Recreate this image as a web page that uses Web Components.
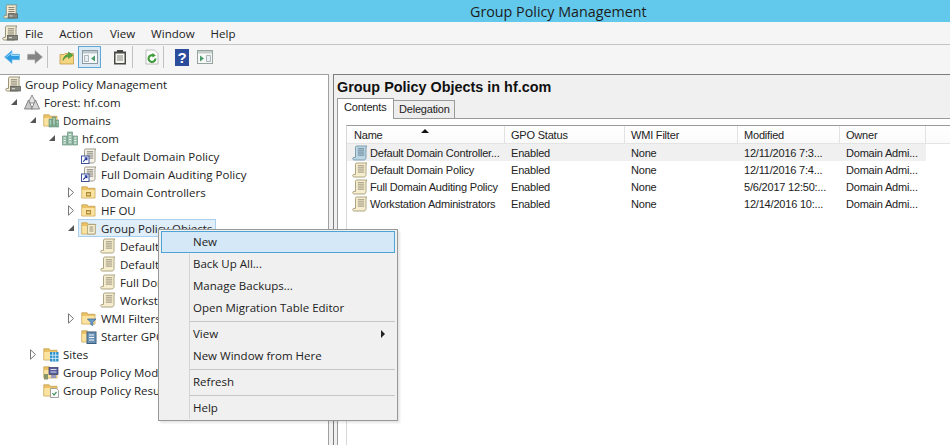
<!DOCTYPE html>
<html>
<head>
<meta charset="utf-8">
<title>Group Policy Management</title>
<style>
  html, body { margin: 0; height: 100%; overflow: hidden; background: #f0f0f0; }
  body { font-family: "Open Sans", "Liberation Sans", sans-serif; font-size: 11.5px; color: #222; }
</style>
</head>
<body>
<gpm-app>
  <gpm-titlebar slot="title">Group Policy Management</gpm-titlebar>
  <gpm-menubar slot="menu"></gpm-menubar>
  <gpm-toolbar slot="tools"></gpm-toolbar>

  <gpm-tree slot="tree">
    <gpm-tree-row level="0" icon="gpmc">Group Policy Management</gpm-tree-row>
    <gpm-tree-row level="1" icon="forest" state="open">Forest: hf.com</gpm-tree-row>
    <gpm-tree-row level="2" icon="domains" state="open">Domains</gpm-tree-row>
    <gpm-tree-row level="3" icon="domain" state="open">hf.com</gpm-tree-row>
    <gpm-tree-row level="4" icon="link">Default Domain Policy</gpm-tree-row>
    <gpm-tree-row level="4" icon="link">Full Domain Auditing Policy</gpm-tree-row>
    <gpm-tree-row level="4" icon="ou" state="closed">Domain Controllers</gpm-tree-row>
    <gpm-tree-row level="4" icon="ou" state="closed">HF OU</gpm-tree-row>
    <gpm-tree-row level="4" icon="gpofolder" state="open" selected>Group Policy Objects</gpm-tree-row>
    <gpm-tree-row level="5" icon="scroll">Default Domain Controllers Policy</gpm-tree-row>
    <gpm-tree-row level="5" icon="scroll">Default Domain Policy</gpm-tree-row>
    <gpm-tree-row level="5" icon="scroll">Full Domain Auditing Policy</gpm-tree-row>
    <gpm-tree-row level="5" icon="scroll">Workstation Administrators</gpm-tree-row>
    <gpm-tree-row level="4" icon="wmi" state="closed">WMI Filters</gpm-tree-row>
    <gpm-tree-row level="4" icon="starter">Starter GPOs</gpm-tree-row>
    <gpm-tree-row level="2" icon="sites" state="closed">Sites</gpm-tree-row>
    <gpm-tree-row level="2" icon="modeling">Group Policy Modeling</gpm-tree-row>
    <gpm-tree-row level="2" icon="results">Group Policy Results</gpm-tree-row>
  </gpm-tree>

  <gpm-details slot="details" heading="Group Policy Objects in hf.com">
    <gpm-gpo-list></gpm-gpo-list>
  </gpm-details>

  <gpm-context-menu slot="overlay"></gpm-context-menu>
</gpm-app>

<script>
(function () {
  // small helper, every element gets its shadow root from a template string
  function shadow(el, html) {
    const t = document.createElement("template");
    t.innerHTML = html;
    el.attachShadow({ mode: "open" }).appendChild(t.content.cloneNode(true));
    return el.shadowRoot;
  }

  const folder = `
    <path d="M.8 4.5V2.800h5.400l1 1.500h6.800V14H.8z" fill="#ecc264" stroke="#c49f52" stroke-width=".8"/>
    <path d="M1.200 6h12.400v7.600H1.200z" fill="#fae3a0"/>`;
  const scrollBody = (fill, line, edge) => `
    <path d="M4.500 1h10.500c-.8.500-1 1.200-1 2v9.500c0 1.500-.8 2.500-2 2.500H2.300c-1 0-1.600-.6-1.600-1.400 0-.6.500-1.200 1.200-1.200h1.600V3c0-1.200.3-2 1-2z" fill="${fill}" stroke="${edge}" stroke-width=".9"/>
    <path d="M5.800 3.800h6.400M5.800 5.900h6.400M5.800 8h6.400M5.800 10.100h6.400" stroke="${line}" stroke-width=".9"/>`;

  const ICONS = {
    scroll: scrollBody("#f7eecf", "#8a8570", "#a39a76"),
    scrollblue: scrollBody("#bcd6e3", "#587488", "#7595a8"),
    link: `
      ${scrollBody("#f4f2ea", "#6e6c60", "#96937f")}
      <rect x="0.500" y="8" width="7.500" height="7.500" fill="#fff" stroke="#3c4f9c"/>
      <path d="M2.200 13.600L5.600 10.200M3.600 9.900h2.300v2.300" fill="none" stroke="#2c40a0" stroke-width="1.200"/>`,
    gpmc: `
      ${scrollBody("#f5edd6", "#6f6c5e", "#8d8770")}
      <rect x="5.500" y="10.500" width="10" height="4.500" fill="#85857e" stroke="#55554f" stroke-width=".7"/>
      <path d="M7 12.700h3" stroke="#e4e4dc"/>`,
    forest: `
      <path d="M8 1L12 9H4z" fill="#e4e4e4" stroke="#858585" stroke-width=".9"/>
      <path d="M4.500 6L8.500 15H.5z" fill="#c8c8c8" stroke="#7b7b7b" stroke-width=".9"/>
      <path d="M11.500 6L15.500 15H7.500z" fill="#d8d8d8" stroke="#7b7b7b" stroke-width=".9"/>`,
    domains: `
      ${folder}
      <path d="M6 7h3v8H6zM9.500 5h3v10h-3zM13 8h2.600v7H13z" fill="#86b59b" stroke="#5f8a74" stroke-width=".6"/>
      <path d="M6.800 9h1.400M6.800 11h1.400M10.300 7h1.400M10.300 9h1.400M10.300 11h1.400M13.600 10h1.400" stroke="#e8f2ec" stroke-width=".8"/>`,
    domain: `
      <path d="M.5 6h4.500v9H.5zM5.500 2h5v13h-5zM11 6h4.500v9H11z" fill="#95bfa8" stroke="#6e9480" stroke-width=".7"/>
      <path d="M1.600 8h2.300M1.600 10.500h2.300M1.600 13h2.300M6.800 4.500h2.400M6.800 7h2.400M6.800 9.500h2.400M6.800 12h2.400M12.100 8h2.300M12.100 10.500h2.300M12.100 13h2.300" stroke="#eef5f1" stroke-width="1"/>`,
    ou: `
      ${folder}
      <path d="M5 8h5v4.500H5z" fill="#b08a38"/>
      <path d="M6 9.500h3v1.600H6z" fill="#f5e09a"/>`,
    gpofolder: `
      ${folder}
      <path d="M8 4.500h7c-.5.500-.7 1-.7 1.500v8H6.500V6C6.500 5.100 7 4.500 8 4.500z" fill="#f7eecf" stroke="#a39a76" stroke-width=".8"/>
      <path d="M8.500 7h3.800M8.500 9h3.800M8.500 11h3.800" stroke="#8a8570" stroke-width=".9"/>`,
    wmi: `
      ${folder}
      <path d="M6.500 9h8.500l-3.200 3.400V15.500l-2-1V12.400z" fill="#6a9bc9" stroke="#40709c" stroke-width=".8"/>`,
    starter: `
      ${folder}
      <rect x="6" y="4" width="9" height="11.500" fill="#6a93b7" stroke="#3d5e7e"/>
      <path d="M8 7h5M8 9.500h5M8 12h5" stroke="#eef3f8" stroke-width="1"/>`,
    sites: `
      ${folder}
      <rect x="7" y="6" width="8.500" height="9.500" fill="#2a90cc"/>
      <path d="M7 9.200h8.500M7 12.400h8.500M9.800 6v9.500M12.700 6v9.500" stroke="#e8f4fb" stroke-width=".8"/>`,
    modeling: `
      ${folder}
      <rect x="6" y="3.500" width="9" height="7" fill="#575c98" stroke="#383b6c" stroke-width=".7"/>
      <path d="M7.500 5.500h6M7.500 8h6" stroke="#dcdff0"/>
      <path d="M1 10h4v5.500H1z" fill="#87956a"/>
      <path d="M8 11h5v3H8z" fill="#9a9abc"/>`,
    results: `
      ${folder}
      <path d="M7.500 6.500h6l2 2v7h-8z" fill="#fbfbfb" stroke="#8a8a8a" stroke-width=".8"/>
      <path d="M9.500 11l1.500 2 2.500-3" fill="none" stroke="#4a9568" stroke-width="1.200"/>`,
    back: `
      <path d="M.5 8L8 1.500v3.800h7.500v5.400H8v3.800z" fill="#2f9be0" stroke="#6bbcec" stroke-width=".6"/>
      <path d="M2.500 8L7.500 4V6.500h7.500" fill="none" stroke="#9ad8f8" stroke-width="1"/>`,
    forward: `
      <path d="M15.500 8L8 1.500v3.800H.5v5.400H8v3.800z" fill="#858585" stroke="#adadad" stroke-width=".6"/>`,
    up: `
      <path d="M1 5.500h4l1-1h8.500V15H1z" fill="#f5d680" stroke="#c09a46" stroke-width=".8"/>
      <path d="M4 11.500C4.500 7.500 7 5.500 9.500 5.500V3L14 6.300 9.500 9.500V7.500C7.500 7.500 5.500 8.800 4 11.500z" fill="#4fa642" stroke="#37812f" stroke-width=".5"/>`,
    treepane: `
      <rect x=".5" y="1.500" width="15" height="13" fill="#f7f9fa" stroke="#8c9aa3"/>
      <path d="M1 2h14v2.500H1z" fill="#bcc7ce"/>
      <path d="M2.500 6.500h4v6h-4z" fill="#e8eef2" stroke="#8d9ca5" stroke-width=".7"/>
      <path d="M13 6.500v6L9 9.500z" fill="#4a9a69"/>`,
    viewpane: `
      <rect x=".5" y="1.500" width="15" height="13" fill="#f7f9f8" stroke="#97a39e"/>
      <path d="M1 2h14v2.500H1z" fill="#c4cdc9"/>
      <path d="M3 6.500v6l4-3z" fill="#4a9a69"/>
      <path d="M9.500 6.500h4v6h-4z" fill="#e8eef2" stroke="#8d9ca5" stroke-width=".7"/>`,
    clipboard: `
      <rect x="2" y="2.500" width="12" height="13" fill="#484844"/>
      <rect x="3.500" y="4.500" width="9" height="9.500" fill="#f4f4f0"/>
      <rect x="5" y="1" width="6" height="3" fill="#484844"/>
      <path d="M5 7h6M5 9h6M5 11h6" stroke="#87877f"/>`,
    refresh: `
      <path d="M2 1h8.500L14 4.500V15H2z" fill="#fdfdfd" stroke="#adadad" stroke-width=".8"/>
      <path d="M11.400 9.500A3.400 3.400 0 1 1 9.500 6.500" fill="none" stroke="#3f9a3a" stroke-width="2.100"/>
      <path d="M8.500 3.900l3.300 2.500-3.300 2z" fill="#3f9a3a"/>`
  };

  class GpmIcon extends HTMLElement {
    connectedCallback() {
      const size = this.getAttribute("size") || 16;
      shadow(this, `
        <style>:host { display: inline-block; width: ${size}px; height: ${size}px; flex: none; line-height: 0; }</style>
        <svg width="${size}" height="${size}" viewBox="0 0 16 16">${ICONS[this.getAttribute("name")] || ""}</svg>`);
    }
  }
  customElements.define("gpm-icon", GpmIcon);

  class GpmApp extends HTMLElement {
    constructor() {
      super();
      shadow(this, `
        <style>
          :host { display: block; position: relative; width: 950px; height: 445px; overflow: hidden; }
          .panes { display: flex; height: 371px; }
          .tree { width: 328px; flex: none; border-right: 1px solid #a0a0a0; border-top: 1px solid #a0a0a0; background: #fff; }
          .gap { width: 4px; flex: none; }
          .details { flex: 1; min-width: 0; border-left: 1px solid #7d7d7d; border-top: 1px solid #7d7d7d; }
        </style>
        <slot name="title"></slot>
        <slot name="menu"></slot>
        <slot name="tools"></slot>
        <div class="panes">
          <div class="tree"><slot name="tree"></slot></div>
          <div class="gap"></div>
          <div class="details"><slot name="details"></slot></div>
        </div>
        <slot name="overlay"></slot>`);
    }
  }
  customElements.define("gpm-app", GpmApp);

  class GpmTitlebar extends HTMLElement {
    constructor() {
      super();
      shadow(this, `
        <style>
          :host { display: flex; align-items: center; height: 22px; background: #63c9ec; color: #1c1c1c;
                  font-size: 14.3px; padding-left: 3px; }
          .text { margin-left: 452px; white-space: nowrap; }
        </style>
        <gpm-icon name="gpmc" size="15"></gpm-icon>
        <span class="text"><slot></slot></span>`);
    }
  }
  customElements.define("gpm-titlebar", GpmTitlebar);

  class GpmMenubar extends HTMLElement {
    constructor() {
      super();
      const items = [["File", 7], ["Action", 16], ["View", 17], ["Window", 16], ["Help", 16]];
      shadow(this, `
        <style>
          :host { display: flex; align-items: center; height: 22px; background: #f5f5f5; border-bottom: 1px solid #c4c4c4; padding-left: 2px; }
          span { white-space: nowrap; }
        </style>
        <gpm-icon name="gpmc"></gpm-icon>
        ${items.map(([t, m]) => `<span style="margin-left:${m}px">${t}</span>`).join("")}`);
    }
  }
  customElements.define("gpm-menubar", GpmMenubar);

  class GpmToolbar extends HTMLElement {
    constructor() {
      super();
      shadow(this, `
        <style>
          :host { display: flex; align-items: center; height: 29px; box-sizing: border-box; background: #f5f5f5; padding: 0 0 5px 4px; }
          gpm-icon { flex: none; }
          .sep { width: 1px; height: 22px; background: #c2c2c2; flex: none; }
          .on { display: flex; align-items: center; justify-content: center; width: 23px; height: 22px; flex: none; box-sizing: border-box;
                border: 1px solid #5fa8d6; background: #dbe9f5; margin-left: 3px; }
        </style>
        <gpm-icon name="back"></gpm-icon>
        <gpm-icon name="forward" style="margin-left:7px"></gpm-icon>
        <div class="sep" style="margin-left:4px"></div>
        <gpm-icon name="up" style="margin-left:11px"></gpm-icon>
        <div class="on"><gpm-icon name="treepane"></gpm-icon></div>
        <gpm-icon name="clipboard" style="margin-left:11px"></gpm-icon>
        <div class="sep" style="margin-left:4px"></div>
        <gpm-icon name="refresh" style="margin-left:11px"></gpm-icon>
        <div class="sep" style="margin-left:3px"></div>
        <svg width="14" height="17" viewBox="0 0 14 17" style="margin-left:11px;flex:none">
          <rect width="14" height="17" fill="#2c4c9c"/>
          <text x="7" y="14" text-anchor="middle" font-family="Liberation Sans" font-size="15" font-weight="700" fill="#fff">?</text>
        </svg>
        <gpm-icon name="viewpane" style="margin-left:8px"></gpm-icon>`);
    }
  }
  customElements.define("gpm-toolbar", GpmToolbar);

  class GpmTree extends HTMLElement {
    constructor() {
      super();
      shadow(this, `
        <style>:host { display: block; }</style>
        <slot></slot>`);
    }
  }
  customElements.define("gpm-tree", GpmTree);

  class GpmTreeRow extends HTMLElement {
    connectedCallback() {
      const level = Number(this.getAttribute("level"));
      const state = this.getAttribute("state");
      const sel = this.hasAttribute("selected");
      let arrow = "";
      if (state === "open") arrow = `<svg width="8" height="8" viewBox="0 0 8 8"><path d="M7 1v6H1z" fill="#555"/></svg>`;
      if (state === "closed") arrow = `<svg width="8" height="11" viewBox="0 0 8 11"><path d="M1.500 .8l5 4.700-5 4.700z" fill="#fff" stroke="#777"/></svg>`;
      shadow(this, `
        <style>
          :host { display: flex; align-items: center; height: 18px; white-space: nowrap; padding-left: ${5 + level * 19}px; }
          .exp { width: 16px; margin: 0 3px 0 -19px; display: flex; justify-content: center; align-items: center; flex: none; padding-left: 1px; box-sizing: border-box; }
          .item { display: flex; align-items: center; gap: 4px; height: 18px; box-sizing: border-box; }
          .item.sel { margin-left: -3px; padding: 0 3px 0 2px; background: #e0eefa; border: 1px solid #a9cfee; }
        </style>
        <span class="exp">${arrow}</span>
        <span class="item ${sel ? "sel" : ""}">
          <gpm-icon name="${this.getAttribute("icon")}"></gpm-icon><span><slot></slot></span>
        </span>`);
    }
  }
  customElements.define("gpm-tree-row", GpmTreeRow);

  class GpmDetails extends HTMLElement {
    connectedCallback() {
      shadow(this, `
        <style>
          :host { display: block; height: 100%; background: #f0f0f0; }
          h1 { margin: 0; height: 23px; padding: 2px 0 0 3px; box-sizing: border-box; font: bold 14.4px "Liberation Sans", sans-serif; color: #111; line-height: 20px; }
          .tabs { display: flex; align-items: flex-end; height: 20px; padding-left: 3px; font: 11px "Liberation Sans", sans-serif; letter-spacing: -.2px; position: relative; z-index: 1; }
          .tab { box-sizing: border-box; border: 1px solid #9a9a9a; border-bottom: 0; white-space: nowrap; }
          .tab.on { width: 57px; height: 21px; margin-bottom: -1px; background: #fff; padding: 2px 0 0 6px; }
          .tab.off { width: 61px; height: 18px; background: #ededed; border-left: 0; padding: 2px 0 0 5px; }
          .panel { margin-left: 3px; border: 1px solid #9a9a9a; border-right: 0; border-bottom: 0; background: #fff; padding: 6px 0 0 8px; height: 330px; box-sizing: border-box; }
        </style>
        <h1>${this.getAttribute("heading")}</h1>
        <div class="tabs">
          <div class="tab on">Contents</div>
          <div class="tab off">Delegation</div>
        </div>
        <div class="panel"><slot></slot></div>`);
    }
  }
  customElements.define("gpm-details", GpmDetails);

  class GpmGpoList extends HTMLElement {
    constructor() {
      super();
      const head = ["Name", "GPO Status", "WMI Filter", "Modified", "Owner"];
      const rows = [
        ["Default Domain Controller...", "Enabled", "None", "12/11/2016 7:3...", "Domain Admi...", "scrollblue"],
        ["Default Domain Policy", "Enabled", "None", "12/11/2016 7:4...", "Domain Admi...", "scroll"],
        ["Full Domain Auditing Policy", "Enabled", "None", "5/6/2017 12:50:...", "Domain Admi...", "scroll"],
        ["Workstation Administrators", "Enabled", "None", "12/14/2016 10:...", "Domain Admi...", "scroll"]
      ];
      shadow(this, `
        <style>
          :host { display: block; height: 320px; background: #fff; border-top: 1px solid #9a9a9a; border-left: 1px solid #d8d8d8;
                  font: 11px "Liberation Sans", sans-serif; letter-spacing: -.2px; color: #222; }
          .row { display: grid; grid-template-columns: 158px 120px 113px 102px 86px; width: 579px; height: 17px; align-items: center; }
          .row.head { height: 18px; border-bottom: 1px solid #e4e4e4; box-sizing: border-box; position: relative; background: linear-gradient(#fff, #fafafa); width: 100%; }
          .head div { height: 18px; line-height: 18px; padding-left: 6px; border-right: 1px solid #e2e2e2; box-sizing: border-box; }
          .head div:first-child { padding-left: 7px; }
          .head .arrow { position: absolute; left: 74px; top: 3px; padding: 0; border: 0; width: 0; height: 0;
                         border-left: 4px solid transparent; border-right: 4px solid transparent; border-bottom: 4px solid #111; }
          .cell { padding-left: 6px; white-space: nowrap; overflow: hidden; }
          .name { display: flex; align-items: center; gap: 2px; padding-left: 5px; }
          .row.hot { background: #f0f0f0; }
        </style>
        <div class="row head">${head.map(h => `<div>${h}</div>`).join("")}<div class="arrow"></div></div>
        ${rows.map((r, i) => `
          <div class="row ${i === 0 ? "hot" : ""}">
            <div class="cell name"><gpm-icon name="${r[5]}"></gpm-icon><span>${r[0]}</span></div>
            <div class="cell">${r[1]}</div>
            <div class="cell">${r[2]}</div>
            <div class="cell">${r[3]}</div>
            <div class="cell">${r[4]}</div>
          </div>`).join("")}`);
    }
  }
  customElements.define("gpm-gpo-list", GpmGpoList);

  class GpmContextMenu extends HTMLElement {
    constructor() {
      super();
      const entries = ["New", "Back Up All...", "Manage Backups...", "Open Migration Table Editor", "-", "View>", "New Window from Here", "-", "Refresh", "-", "Help"];
      shadow(this, `
        <style>
          :host { position: absolute; left: 158px; top: 229px; width: 240px; height: 192px; box-sizing: border-box;
                  background: #f0f0f0; border: 1px solid #979797; padding: 1px 2px; box-shadow: 2px 2px 2px rgba(0,0,0,.1); }
          .gutter { position: absolute; left: 30px; top: 24px; bottom: 1px; width: 1px; background: #d4d4d4; }
          .item { position: relative; display: flex; align-items: center; height: 22px; padding: 0 0 2px 32px; box-sizing: border-box; white-space: nowrap; }
          .item.hot { background: #d5e8f8; outline: 1px solid #4da3d6; outline-offset: -1px; }
          .sep { position: relative; height: 4px; display: flex; align-items: center; padding-left: 29px; }
          .sep i { display: block; height: 1px; width: 100%; background: #c6c6c6; }
          .more { position: absolute; right: 10px; top: 7px; width: 0; height: 0; border-left: 4px solid #222;
                  border-top: 4px solid transparent; border-bottom: 4px solid transparent; }
        </style>
        <div class="gutter"></div>
        ${entries.map((e, i) => {
          if (e === "-") return `<div class="sep"><i></i></div>`;
          const sub = e.endsWith(">");
          return `<div class="item ${i === 0 ? "hot" : ""}">${sub ? e.slice(0, -1) : e}${sub ? `<span class="more"></span>` : ""}</div>`;
        }).join("")}`);
    }
  }
  customElements.define("gpm-context-menu", GpmContextMenu);
})();
</script>
</body>
</html>
